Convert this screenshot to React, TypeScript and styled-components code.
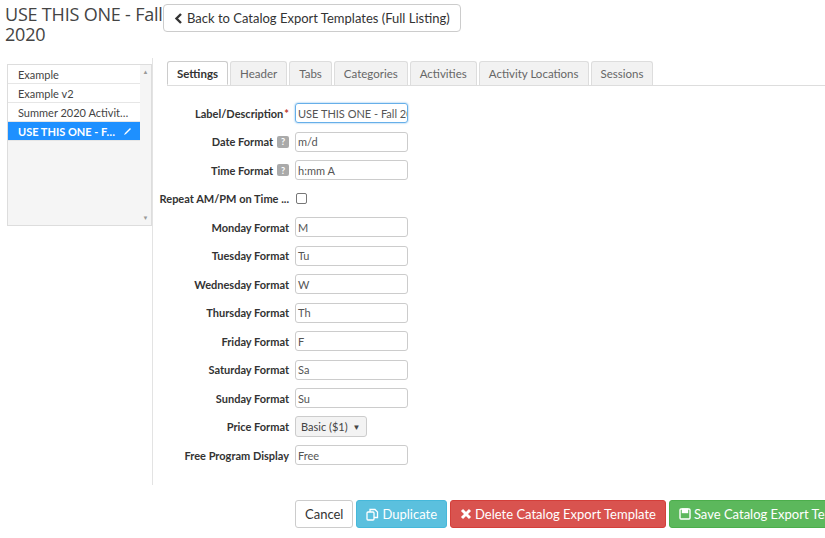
import styled, { createGlobalStyle } from "styled-components";

const GlobalStyle = createGlobalStyle`
  body {
    margin: 0;
    font-family: "Open Sans", "Liberation Sans", sans-serif;
    color: #333;
    background: #fff;
  }
`;

const Page = styled.div`
  width: 825px;
  height: 538px;
  overflow: hidden;
`;

const TopBar = styled.div`
  display: flex;
  align-items: flex-start;
  padding: 4px 0 0 5px;
  height: 54px;
`;

const Title = styled.h1`
  margin: 0;
  width: 158px;
  font-size: 18px;
  font-weight: 400;
  line-height: 20px;
  color: #444;
  letter-spacing: -0.2px;
`;

const BackButton = styled.button`
  height: 28px;
  padding: 0 10px;
  display: flex;
  align-items: center;
  gap: 4px;
  background: #fff;
  border: 1px solid #ccc;
  border-radius: 4px;
  font-family: Lato, sans-serif;
  font-size: 13px;
  color: #333;
`;

const Main = styled.div`
  display: flex;
`;

const Sidebar = styled.div`
  width: 163px;
  padding: 6px 0 0 7px;
  border-right: 1px solid #e3e3e3;
  height: 427px;
  box-sizing: border-box;
`;

const ListBox = styled.div`
  width: 143px;
  height: 160px;
  border: 1px solid #ddd;
  display: flex;
  background: #f5f5f5;
`;

const ListItems = styled.div`
  flex: 1;
  min-width: 0;
  display: flex;
  flex-direction: column;
`;

const ListItem = styled.div<{ $active?: boolean }>`
  height: 18px;
  display: flex;
  align-items: center;
  justify-content: space-between;
  gap: 4px;
  padding: 0 8px 0 10px;
  font-family: Lato, sans-serif;
  font-size: 11px;
  white-space: nowrap;
  border-bottom: 1px solid #e6e6e6;
  background: ${(p) => (p.$active ? "#1e90ff" : "#fff")};
  color: ${(p) => (p.$active ? "#fff" : "#444")};
  font-weight: ${(p) => (p.$active ? 700 : 400)};
`;

const ItemText = styled.span`
  overflow: hidden;
  text-overflow: ellipsis;
`;

const Scroll = styled.div`
  width: 11px;
  display: flex;
  flex-direction: column;
  justify-content: space-between;
  align-items: center;
  font-size: 6px;
  color: #999;
  padding: 3px 0;
`;

const Content = styled.div`
  flex: 1;
  padding: 3px 0 0 14px;
`;

const Tabs = styled.div`
  display: flex;
  gap: 2px;
  border-bottom: 1px solid #ddd;
  height: 24px;
`;

const Tab = styled.div<{ $active?: boolean }>`
  padding: 0 9px;
  height: 24px;
  display: flex;
  align-items: center;
  font-family: Lato, sans-serif;
  font-size: 11.5px;
  border: 1px solid ${(p) => (p.$active ? "#ccc" : "#ddd")};
  border-bottom: ${(p) => (p.$active ? "1px solid #fff" : "none")};
  border-radius: 3px 3px 0 0;
  background: ${(p) => (p.$active ? "#fff" : "#f2f2f2")};
  color: ${(p) => (p.$active ? "#333" : "#666")};
  font-weight: ${(p) => (p.$active ? 700 : 400)};
  box-sizing: border-box;
`;

const Form = styled.div`
  padding-top: 17px;
  display: flex;
  flex-direction: column;
  gap: 8.5px;
`;

const Row = styled.div`
  display: flex;
  align-items: center;
  height: 20px;
`;

const Label = styled.div`
  width: 122px;
  font-family: Lato, sans-serif;
  font-size: 11px;
  font-weight: 700;
  color: #333;
  display: flex;
  justify-content: flex-end;
  align-items: center;
  gap: 4px;
  padding-right: 6px;
  white-space: nowrap;
`;

const Required = styled.span`
  color: #c0392b;
  margin-left: -3px;
`;

const Help = styled.span`
  background: #aaa;
  color: #fff;
  font-size: 9px;
  width: 12px;
  height: 12px;
  border-radius: 2px;
  display: inline-flex;
  align-items: center;
  justify-content: center;
`;

const Input = styled.div<{ $focus?: boolean }>`
  width: 113px;
  height: 20px;
  box-sizing: border-box;
  border: 1px solid ${(p) => (p.$focus ? "#66afe9" : "#ccc")};
  box-shadow: ${(p) => (p.$focus ? "0 0 2px #66afe9" : "none")};
  border-radius: 3px;
  padding: 0 2px;
  font-family: Lato, sans-serif;
  font-size: 11px;
  color: #555;
  display: flex;
  align-items: center;
  overflow: hidden;
  white-space: nowrap;
`;

const Checkbox = styled.div`
  width: 9px;
  height: 9px;
  border: 1px solid #777;
  border-radius: 2px;
  margin-left: 1px;
`;

const Select = styled.div`
  height: 19px;
  padding: 0 5px;
  border: 1px solid #ccc;
  border-radius: 3px;
  background: #f3f3f3;
  font-family: Lato, sans-serif;
  font-size: 11px;
  color: #444;
  display: flex;
  align-items: center;
  gap: 5px;
`;

const Actions = styled.div`
  display: flex;
  gap: 3px;
  margin: 35px 0 0 128px;
`;

const Btn = styled.button<{ $bg: string; $fg: string; $border: string }>`
  height: 28px;
  padding: 0 9px;
  border-radius: 3px;
  border: 1px solid ${(p) => p.$border};
  background: ${(p) => p.$bg};
  color: ${(p) => p.$fg};
  font-family: Lato, sans-serif;
  font-size: 13px;
  white-space: nowrap;
  display: flex;
  align-items: center;
  gap: 3px;
`;

const fields = [
  ["Monday Format", "M"],
  ["Tuesday Format", "Tu"],
  ["Wednesday Format", "W"],
  ["Thursday Format", "Th"],
  ["Friday Format", "F"],
  ["Saturday Format", "Sa"],
  ["Sunday Format", "Su"],
];

export default function App() {
  return (
    <Page>
      <GlobalStyle />
      <TopBar>
        <Title>USE THIS ONE - Fall 2020</Title>
        <BackButton>
          <svg width="9" height="11" viewBox="0 0 9 11">
            <path d="M7 1 L2.5 5.5 L7 10" stroke="#333" strokeWidth="2.4" fill="none" />
          </svg>
          Back to Catalog Export Templates (Full Listing)
        </BackButton>
      </TopBar>
      <Main>
        <Sidebar>
          <ListBox>
            <ListItems>
              <ListItem>Example</ListItem>
              <ListItem>Example v2</ListItem>
              <ListItem>
                <ItemText>Summer 2020 Activity Guide</ItemText>
              </ListItem>
              <ListItem $active>
                <ItemText>USE THIS ONE - Fall 2020</ItemText>
                <svg width="9" height="9" viewBox="0 0 9 9" style={{ flexShrink: 0 }}>
                  <path d="M1 8 L2 6 L7 1 L8 2 L3 7 Z" fill="#fff" />
                </svg>
              </ListItem>
            </ListItems>
            <Scroll>
              <span>▲</span>
              <span>▼</span>
            </Scroll>
          </ListBox>
        </Sidebar>
        <Content>
          <Tabs>
            <Tab $active>Settings</Tab>
            <Tab>Header</Tab>
            <Tab>Tabs</Tab>
            <Tab>Categories</Tab>
            <Tab>Activities</Tab>
            <Tab>Activity Locations</Tab>
            <Tab>Sessions</Tab>
          </Tabs>
          <Form>
            <Row>
              <Label>
                Label/Description<Required>*</Required>
              </Label>
              <Input $focus>USE THIS ONE - Fall 2020</Input>
            </Row>
            <Row>
              <Label>
                Date Format <Help>?</Help>
              </Label>
              <Input>m/d</Input>
            </Row>
            <Row>
              <Label>
                Time Format <Help>?</Help>
              </Label>
              <Input>h:mm A</Input>
            </Row>
            <Row>
              <Label>Repeat AM/PM on Time ...</Label>
              <Checkbox />
            </Row>
            {fields.map(([l, v]) => (
              <Row key={l}>
                <Label>{l}</Label>
                <Input>{v}</Input>
              </Row>
            ))}
            <Row>
              <Label>Price Format</Label>
              <Select>
                Basic ($1) <span style={{ fontSize: 8 }}>▼</span>
              </Select>
            </Row>
            <Row>
              <Label>Free Program Display</Label>
              <Input>Free</Input>
            </Row>
          </Form>
          <Actions>
            <Btn $bg="#fff" $fg="#333" $border="#ccc">Cancel</Btn>
            <Btn $bg="#5bc0de" $fg="#fff" $border="#46b8da">
              <svg width="13" height="13" viewBox="0 0 13 13" fill="none" stroke="#fff" strokeWidth="1.3">
                <rect x="1" y="4" width="7" height="8" rx="1" />
                <path d="M4 4 V1.5 H9 L11.5 4 V9.5 H8" />
              </svg>
              Duplicate
            </Btn>
            <Btn $bg="#d9534f" $fg="#fff" $border="#d43f3a">
              <svg width="12" height="12" viewBox="0 0 12 12">
                <path d="M2 2 L10 10 M10 2 L2 10" stroke="#fff" strokeWidth="3" />
              </svg>
              Delete Catalog Export Template
            </Btn>
            <Btn $bg="#5cb85c" $fg="#fff" $border="#4cae4c">
              <svg width="12" height="12" viewBox="0 0 12 12" fill="none" stroke="#fff" strokeWidth="1.4">
                <rect x="1" y="1" width="10" height="10" rx="1" />
                <rect x="3.5" y="1" width="5" height="3.5" fill="#fff" />
              </svg>
              Save Catalog Export Template
            </Btn>
          </Actions>
        </Content>
      </Main>
    </Page>
  );
}
